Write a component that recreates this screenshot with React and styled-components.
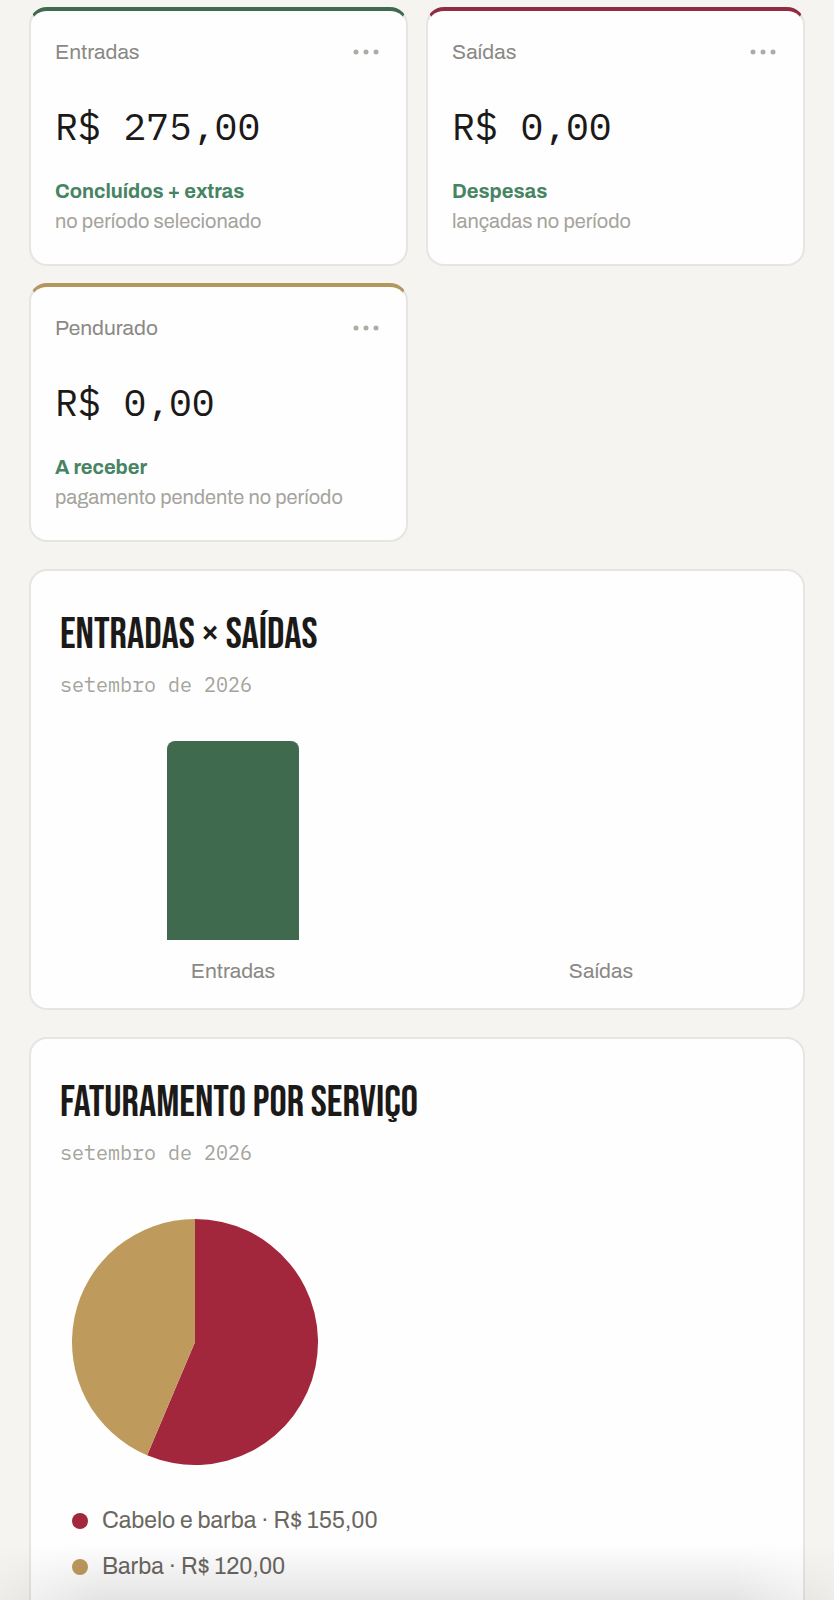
import React from "react";
import styled, { createGlobalStyle } from "styled-components";

const colors = {
  page: "#f5f4f0",
  card: "#fefefe",
  line: "#e6e5e1",
  ink: "#1c1a18",
  label: "#8b8984",
  muted: "#a5a39c",
  legend: "#6a6761",
  positive: "#468463",
  green: "#406a4e",
  red: "#a3273c",
  redLine: "#8f2c3f",
  gold: "#be9b5c",
  goldLine: "#b3975f",
};

const GlobalStyle = createGlobalStyle`
  *, *::before, *::after { box-sizing: border-box; }
  body {
    margin: 0;
    background: ${colors.page};
    font-family: Archivo, "Liberation Sans", Arial, sans-serif;
    color: ${colors.ink};
  }
  h2, p, ul, figure { margin: 0; padding: 0; }
`;

const Page = styled.main`
  display: flex;
  flex-direction: column;
  gap: 27px;
  height: 100vh;
  overflow: hidden;
  padding: 7px 29px 0;
`;

const StatGrid = styled.section`
  display: grid;
  grid-template-columns: repeat(2, minmax(0, 1fr));
  gap: 17px 18px;
`;

const StatCard = styled.article`
  padding: 25px 24px 28px;
  background: ${colors.card};
  border: 2px solid ${colors.line};
  border-top: 4px solid ${(p) => p.$accent};
  border-radius: 18px;
`;

const StatHeader = styled.header`
  display: flex;
  align-items: center;
  justify-content: space-between;
  height: 32px;
`;

const StatLabel = styled.h2`
  font-size: 21px;
  font-weight: 400;
  line-height: 30px;
  color: ${colors.label};
`;

const MenuButton = styled.button`
  display: flex;
  padding: 0;
  border: 0;
  background: none;
  color: #adaba5;
  cursor: pointer;
`;

const StatValue = styled.p`
  margin: 36px 0 28px;
  font-family: "IBM Plex Mono", "DejaVu Sans Mono", monospace;
  font-size: 38px;
  line-height: 44px;
  white-space: nowrap;
`;

const StatNote = styled.p`
  font-size: 20px;
  line-height: 30px;
  color: ${colors.muted};
`;

const StatStrong = styled.strong`
  display: block;
  font-weight: 700;
  color: ${colors.positive};
`;

const Panel = styled.section`
  flex-shrink: 0;
  padding: 42px 29px 22px;
  background: ${colors.card};
  border: 2px solid ${colors.line};
  border-radius: 18px;
`;

const PanelTitle = styled.h2`
  font-family: "Bebas Neue", "Liberation Sans Narrow", "Liberation Sans", sans-serif;
  font-size: 43px;
  font-weight: 400;
  line-height: 44px;
  text-transform: uppercase;
`;

const PanelPeriod = styled.p`
  margin-top: 13px;
  font-family: "IBM Plex Mono", "Liberation Mono", monospace;
  font-size: 20px;
  line-height: 30px;
  color: ${colors.muted};
`;

const BarChart = styled.div`
  display: grid;
  grid-template-columns: repeat(2, minmax(0, 1fr));
  gap: 22px;
  margin-top: 41px;
`;

const BarColumn = styled.figure`
  display: flex;
  flex-direction: column;
  align-items: center;
`;

const BarTrack = styled.div`
  display: flex;
  align-items: flex-end;
  justify-content: center;
  width: 100%;
  height: 199px;
`;

const Bar = styled.div`
  width: 38%;
  background: ${(p) => p.$color};
  border-radius: 8px 8px 0 0;
`;

const BarLabel = styled.figcaption`
  margin-top: 16px;
  font-size: 21px;
  line-height: 30px;
  color: ${colors.label};
`;

const PieArea = styled.div`
  display: flex;
  flex-direction: column;
  align-items: flex-start;
  gap: 41px;
  padding: 51px 12px 40px;
`;

const Legend = styled.ul`
  display: flex;
  flex-direction: column;
  gap: 16px;
  list-style: none;
`;

const LegendItem = styled.li`
  display: flex;
  align-items: center;
  gap: 14px;
  font-size: 23px;
  line-height: 30px;
  color: ${colors.legend};
`;

const LegendDot = styled.span`
  width: 16px;
  height: 16px;
  border-radius: 50%;
  background: ${(p) => p.$color};
`;

const BottomShade = styled.div`
  position: fixed;
  inset: auto 0 0;
  height: 56px;
  background: linear-gradient(to bottom, rgba(0, 0, 0, 0), rgba(0, 0, 0, 0.1));
  mask-image: linear-gradient(
    to right,
    rgba(0, 0, 0, 0.3),
    #000 100px,
    #000 calc(100% - 100px),
    rgba(0, 0, 0, 0.3)
  );
  pointer-events: none;
`;

const stats = [
  { label: "Entradas", value: "R$ 275,00", strong: "Concluídos + extras", note: "no período selecionado", accent: colors.green },
  { label: "Saídas", value: "R$ 0,00", strong: "Despesas", note: "lançadas no período", accent: colors.redLine },
  { label: "Pendurado", value: "R$ 0,00", strong: "A receber", note: "pagamento pendente no período", accent: colors.goldLine },
];

const bars = [
  { label: "Entradas", amount: 275, color: colors.green },
  { label: "Saídas", amount: 0, color: colors.red },
];

const services = [
  { name: "Cabelo e barba", amount: 155, color: colors.red },
  { name: "Barba", amount: 120, color: colors.gold },
];

function DotsIcon() {
  return (
    <svg width="32" height="32" viewBox="0 0 32 32" fill="currentColor" aria-hidden="true">
      <circle cx="6" cy="16" r="2.5" />
      <circle cx="16" cy="16" r="2.5" />
      <circle cx="26" cy="16" r="2.5" />
    </svg>
  );
}

function Pie({ slices }) {
  const total = slices.reduce((sum, s) => sum + s.amount, 0);
  const r = 123;
  const point = (share) => {
    const a = share * 2 * Math.PI;
    return `${r + r * Math.sin(a)} ${r - r * Math.cos(a)}`;
  };
  let done = 0;
  return (
    <svg width={r * 2} height={r * 2} viewBox={`0 0 ${r * 2} ${r * 2}`} role="img" aria-label="Faturamento por serviço">
      {slices.map((s) => {
        const start = done / total;
        done += s.amount;
        const large = s.amount / total > 0.5 ? 1 : 0;
        return (
          <path
            key={s.name}
            d={`M${r} ${r} L${point(start)} A${r} ${r} 0 ${large} 1 ${point(done / total)} Z`}
            fill={s.color}
          />
        );
      })}
    </svg>
  );
}

export default function App() {
  const peak = Math.max(...bars.map((b) => b.amount));
  return (
    <>
      <GlobalStyle />
      <Page>
        <StatGrid>
          {stats.map((s) => (
            <StatCard key={s.label} $accent={s.accent}>
              <StatHeader>
                <StatLabel>{s.label}</StatLabel>
                <MenuButton type="button" aria-label={`Opções de ${s.label}`}>
                  <DotsIcon />
                </MenuButton>
              </StatHeader>
              <StatValue>{s.value}</StatValue>
              <StatNote>
                <StatStrong>{s.strong}</StatStrong>
                {s.note}
              </StatNote>
            </StatCard>
          ))}
        </StatGrid>

        <Panel>
          <PanelTitle>Entradas × Saídas</PanelTitle>
          <PanelPeriod>setembro de 2026</PanelPeriod>
          <BarChart>
            {bars.map((b) => (
              <BarColumn key={b.label}>
                <BarTrack>
                  <Bar $color={b.color} style={{ height: `${(b.amount / peak) * 100}%` }} />
                </BarTrack>
                <BarLabel>{b.label}</BarLabel>
              </BarColumn>
            ))}
          </BarChart>
        </Panel>

        <Panel>
          <PanelTitle>Faturamento por serviço</PanelTitle>
          <PanelPeriod>setembro de 2026</PanelPeriod>
          <PieArea>
            <Pie slices={services} />
            <Legend>
              {services.map((s) => (
                <LegendItem key={s.name}>
                  <LegendDot $color={s.color} />
                  <span>{`${s.name} · R$ ${s.amount},00`}</span>
                </LegendItem>
              ))}
            </Legend>
          </PieArea>
        </Panel>
      </Page>
      <BottomShade />
    </>
  );
}
